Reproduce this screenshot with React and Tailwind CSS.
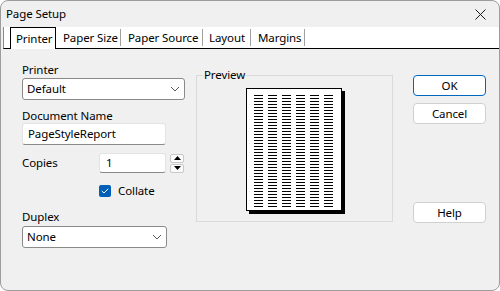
import React from "react";

function Chevron() {
  return (
    <svg width="10" height="6" viewBox="0 0 10 6" className="block">
      <polyline points="1,1 5,5 9,1" fill="none" stroke="#5a5a5a" strokeWidth="1" />
    </svg>
  );
}

function Combo({ value, width }) {
  return (
    <div
      className={`${width} h-[22px] bg-white border border-[#8a8a8a] rounded-[3px] flex items-center justify-between pl-[4px] pr-[4px]`}
    >
      <span>{value}</span>
      <Chevron />
    </div>
  );
}

function PaperLines() {
  const rows = [];
  for (let r = 0; r < 38; r++) {
    for (let c = 0; c < 6; c++) {
      rows.push(<rect key={`${r}-${c}`} x={7 + c * 14} y={6 + r * 3} width="9" height="1" fill="#000" />);
    }
  }
  return (
    <svg width="94" height="121" viewBox="0 0 94 121" className="block" shapeRendering="crispEdges">
      {rows}
    </svg>
  );
}

export default function App() {
  return (
    <div
      className="w-[500px] h-[291px] bg-[#f0f0f0] border border-[#9c9c9c] rounded-[8px] overflow-hidden flex flex-col text-[11.5px] text-black leading-[16px] whitespace-nowrap tracking-[-0.1px]"
      style={{ fontFamily: '"Noto Sans", "Open Sans", sans-serif' }}
    >
      {/* Title bar */}
      <div className="h-[26px] flex items-center justify-between pl-[5px] pr-[13px] shrink-0">
        <span>Page Setup</span>
        <svg width="11" height="11" viewBox="0 0 11 11" className="block">
          <path d="M0.5 0.5 L10.5 10.5 M10.5 0.5 L0.5 10.5" stroke="#1a1a1a" strokeWidth="1" fill="none" />
        </svg>
      </div>

      {/* Tab strip */}
      <div className="h-[22px] shrink-0 bg-white border-b border-black flex items-stretch ml-[2px] border-l border-l-[#8a8a8a]">
        <div className="ml-[6px] w-[46px] border-l border-t border-r border-black pl-[5px] flex items-center -mb-[1px] bg-white">
          Printer
        </div>
        <div className="w-[65px] pl-[7px] flex items-center justify-between">
          <span>Paper Size</span>
          <span className="w-px h-[17px] bg-[#a0a0a0]" />
        </div>
        <div className="w-[82px] pl-[7px] flex items-center justify-between">
          <span>Paper Source</span>
          <span className="w-px h-[17px] bg-[#a0a0a0]" />
        </div>
        <div className="w-[48px] pl-[6px] flex items-center justify-between">
          <span>Layout</span>
          <span className="w-px h-[17px] bg-[#a0a0a0]" />
        </div>
        <div className="w-[54px] pl-[7px] flex items-center justify-between">
          <span>Margins</span>
          <span className="w-px h-[17px] bg-[#a0a0a0]" />
        </div>
      </div>

      {/* Body */}
      <div className="flex pl-[21px] pt-[13px]">
        {/* Left column */}
        <div className="w-[163px] flex flex-col">
          <div className="leading-[16px]">Printer</div>
          <Combo value="Default" width="w-[163px]" />

          <div className="mt-[8px] leading-[15px]">Document Name</div>
          <div className="w-[144px] h-[22px] bg-white border border-[#e3e3e3] border-b-[#8a8a8a] rounded-[3px] flex items-center pl-[5px]">
            PageStyleReport
          </div>

          <div className="mt-[8px] h-[20px] flex items-center">
            <span className="w-[77px]">Copies</span>
            <div className="w-[67px] h-[20px] bg-white border border-[#e3e3e3] border-b-[#8a8a8a] rounded-[3px] flex items-center pl-[6px]">
              1
            </div>
            <div className="ml-[4px] flex flex-col gap-[1px]">
              <div className="w-[14px] h-[9px] bg-[#fbfbfb] border border-[#c8c8c8] rounded-[2px] flex items-center justify-center">
                <svg width="7" height="4" viewBox="0 0 7 4" className="block">
                  <polygon points="0,4 7,4 3.5,0" fill="#000" />
                </svg>
              </div>
              <div className="w-[14px] h-[9px] bg-[#fbfbfb] border border-[#c8c8c8] rounded-[2px] flex items-center justify-center">
                <svg width="7" height="4" viewBox="0 0 7 4" className="block">
                  <polygon points="0,0 7,0 3.5,4" fill="#000" />
                </svg>
              </div>
            </div>
          </div>

          <div className="mt-[12px] ml-[77px] h-[12px] flex items-center">
            <div className="w-[12px] h-[12px] bg-[#005fb8] rounded-[2px] flex items-center justify-center">
              <svg width="8" height="6" viewBox="0 0 8 6" className="block">
                <polyline points="0.8,3 3,5 7.2,0.8" fill="none" stroke="#fff" strokeWidth="1" />
              </svg>
            </div>
            <span className="ml-[7px]">Collate</span>
          </div>

          <div className="mt-[12px] leading-[16px]">Duplex</div>
          <div className="mt-[1px]">
            <Combo value="None" width="w-[145px]" />
          </div>
        </div>

        {/* Preview group */}
        <div className="ml-[11px] mt-[13px] w-[197px] h-[147px] border border-[#dadada] relative">
          <span className="absolute -top-[9px] left-[6px] px-[1px] bg-[#f0f0f0] leading-[16px]">Preview</span>
          <div className="ml-[49px] mt-[12px] w-[96px] h-[123px] bg-white border border-black shadow-[3px_3px_0_#000]">
            <PaperLines />
          </div>
        </div>

        {/* Buttons */}
        <div className="ml-[20px] mt-[13px] flex flex-col">
          <div className="w-[73px] h-[21px] bg-white border border-[#0067c0] rounded-[4px] flex items-center justify-center">
            OK
          </div>
          <div className="mt-[7px] w-[73px] h-[21px] bg-white border border-[#d0d0d0] rounded-[4px] flex items-center justify-center">
            Cancel
          </div>
          <div className="mt-[78px] w-[73px] h-[21px] bg-white border border-[#d0d0d0] rounded-[4px] flex items-center justify-center">
            Help
          </div>
        </div>
      </div>
    </div>
  );
}
